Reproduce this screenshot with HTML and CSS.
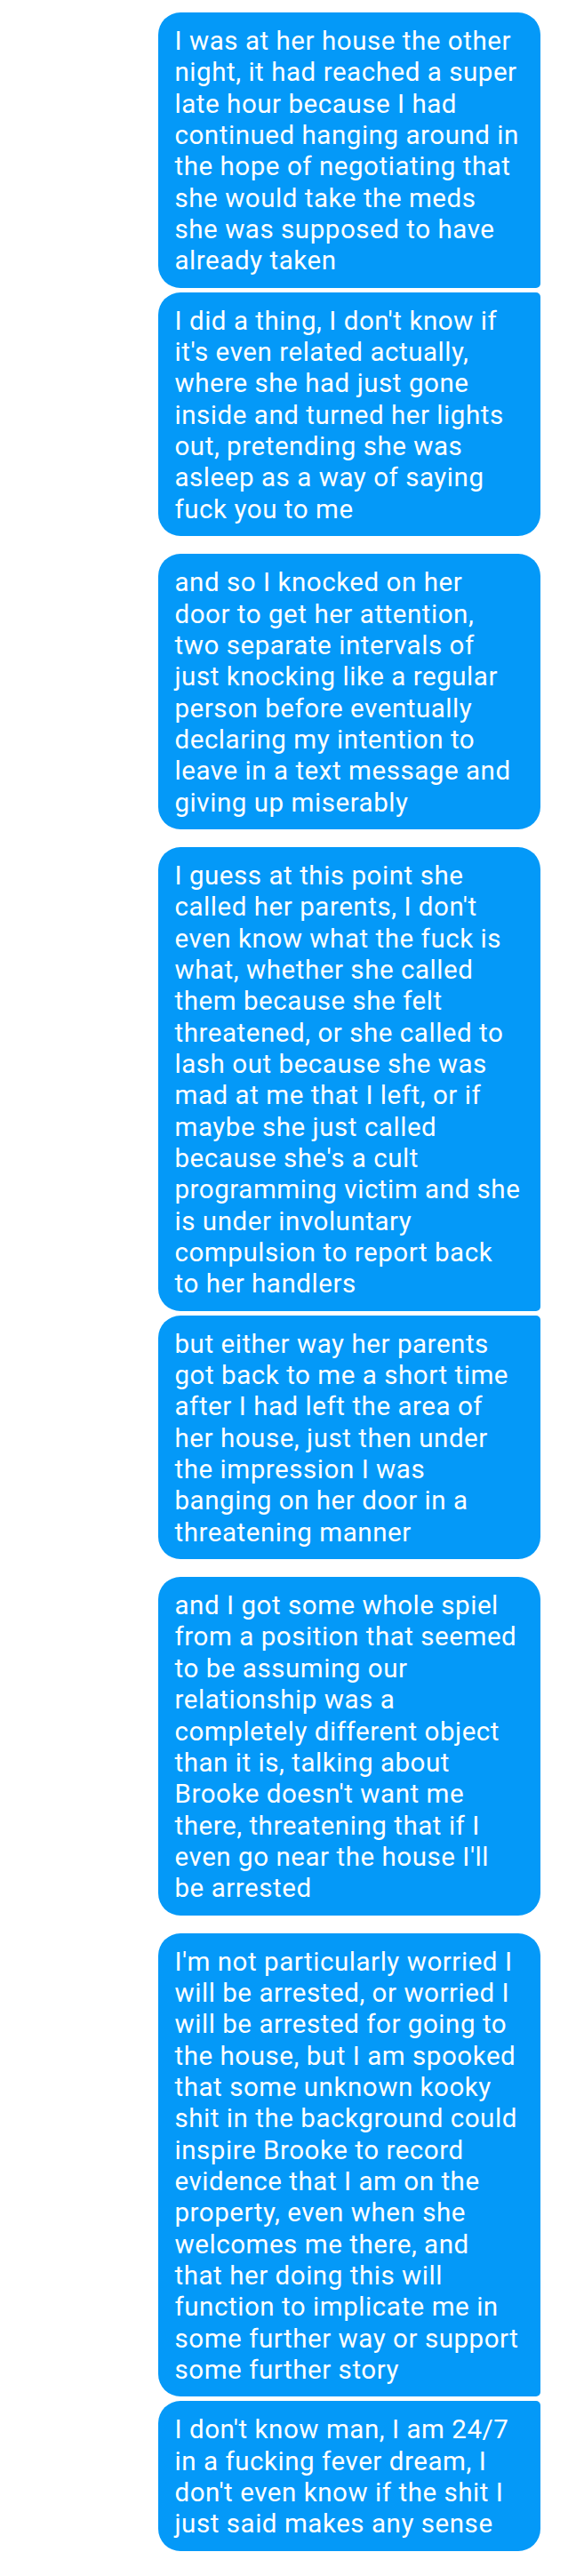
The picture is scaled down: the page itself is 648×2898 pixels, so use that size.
FILE: index.html
```html
<!DOCTYPE html>
<html lang="en">
<head>
<meta charset="utf-8">
<title>Messages</title>
<link rel="stylesheet" href="styles.css">
</head>
<body>
<main class="thread">
  <div class="group">
    <p class="bubble first">I was at her house the other night, it had reached a super late hour because I had continued hanging around in the hope of negotiating that she would take the meds she was supposed to have already taken</p>
    <p class="bubble last">I did a thing, I don't know if it's even related actually, where she had just gone inside and turned her lights out, pretending she was asleep as a way of saying fuck you to me</p>
  </div>
  <div class="group">
    <p class="bubble">and so I knocked on her door to get her attention, two separate intervals of just knocking like a regular person before eventually declaring my intention to leave in a text message and giving up miserably</p>
  </div>
  <div class="group">
    <p class="bubble first">I guess at this point she called her parents, I don't even know what the fuck is what, whether she called them because she felt threatened, or she called to lash out because she was mad at me that I left, or if maybe she just called because she's a cult programming victim and she is under involuntary compulsion to report back to her handlers</p>
    <p class="bubble last">but either way her parents got back to me a short time after I had left the area of her house, just then under the impression I was banging on her door in a threatening manner</p>
  </div>
  <div class="group">
    <p class="bubble">and I got some whole spiel from a position that seemed to be assuming our relationship was a completely different object than it is, talking about Brooke doesn't want me there, threatening that if I even go near the house I'll be arrested</p>
  </div>
  <div class="group">
    <p class="bubble first">I'm not particularly worried I will be arrested, or worried I will be arrested for going to the house, but I am spooked that some unknown kooky shit in the background could inspire Brooke to record evidence that I am on the property, even when she welcomes me there, and that her doing this will function to implicate me in some further way or support some further story</p>
    <p class="bubble last">I don't know man, I am 24/7 in a fucking fever dream, I don't even know if the shit I just said makes any sense</p>
  </div>
</main>
</body>
</html>
```

FILE: styles.css
```css
html, body {
  margin: 0;
  padding: 0;
  background: #ffffff;
}

.thread {
  display: flex;
  flex-direction: column;
  gap: 20px;
  padding: 14px 40px 24px 178px;
}

.group {
  display: flex;
  flex-direction: column;
  gap: 5px;
}

.bubble {
  margin: 0;
  box-sizing: border-box;
  width: 430px;
  padding: 15px 21.5px 12px 18.5px;
  background: #0499f8;
  color: #ffffff;
  font-family: Roboto, "Noto Sans", sans-serif;
  font-size: 29.5px;
  letter-spacing: 0.55px;
  line-height: 35.35px;
  border-radius: 25px;
}

.bubble.first {
  border-bottom-right-radius: 5px;
}

.bubble.last {
  border-top-right-radius: 5px;
}
```
